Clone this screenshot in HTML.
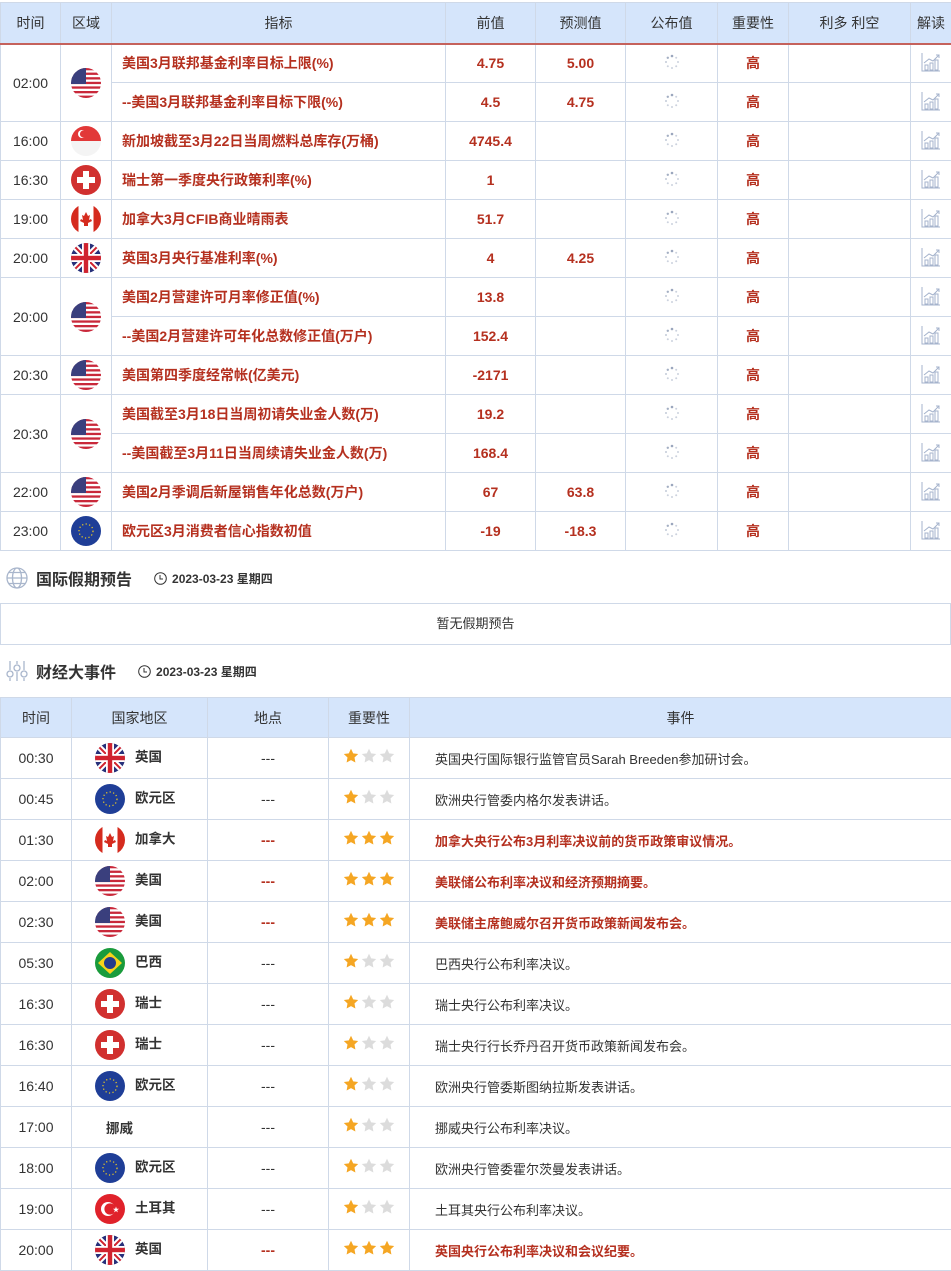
<!DOCTYPE html>
<html><head><meta charset="utf-8">
<style>
*{margin:0;padding:0;box-sizing:border-box}
body{width:951px;height:1270px;overflow:hidden;background:#fff;font-family:"Liberation Sans","Noto Sans CJK SC",sans-serif;font-size:14px;color:#333;position:relative}
table{border-collapse:collapse;table-layout:fixed;position:absolute;left:0;width:951px}
td,th{border:1px solid #cfd9e8;text-align:center;vertical-align:middle;padding:0;overflow:hidden;white-space:nowrap}
th{background:#d5e5fb;font-weight:normal;color:#333;font-size:14px}
#t1{top:2px}
#t1 th{height:41px;border-bottom:2px solid #c5625c}
#t1 td{height:39px}
.r{color:#b5301f;font-weight:bold}
.ind{text-align:left;padding-left:10px;color:#b5301f;font-weight:bold}
.flag{width:30px;height:30px;display:inline-block;vertical-align:middle}
.sec{position:absolute;left:6px;font-size:16px;font-weight:bold;color:#333;display:flex;align-items:center}
.sec .d{font-size:12px;margin-left:22px;font-weight:bold;display:flex;align-items:center}
.box{position:absolute;left:0;top:603px;width:951px;height:42px;border:1px solid #cfd9e8;text-align:center;line-height:40px;font-size:13px}
#t2{top:697px}
#t2 th{height:40px}
#t2 td{height:41px}
.cn{text-align:left;padding-left:23px;font-weight:bold;font-size:13.5px}
.cn svg{margin-right:10px}
.ev{text-align:left;padding-left:25px;font-size:13px}
.evr{color:#b5301f;font-weight:bold}
.st{text-align:left;padding-left:14px}
.st svg{width:16px;height:16px;margin-right:2px;vertical-align:middle;position:relative;top:-3px}
.dash{color:#333}
.dashr{color:#b5301f;font-weight:bold}
</style></head><body>
<svg width="0" height="0" style="position:absolute">
<defs>
<clipPath id="c"><circle cx="15" cy="15" r="15"/></clipPath>
<symbol id="sy" viewBox="0 0 16 16"><path d="M8 .8l2.2 4.6 5 .6-3.7 3.5.9 5L8 12.1 3.6 14.5l.9-5L.8 6l5-.6z" fill="#f5a623"/></symbol>
<symbol id="sg2" viewBox="0 0 16 16"><path d="M8 .8l2.2 4.6 5 .6-3.7 3.5.9 5L8 12.1 3.6 14.5l.9-5L.8 6l5-.6z" fill="#dcdcdc"/></symbol>
<symbol id="us" viewBox="0 0 30 30"><g clip-path="url(#c)"><rect width="30" height="30" fill="#fff"/><g fill="#c9283a"><rect y="0" width="30" height="2.3"/><rect y="4.6" width="30" height="2.3"/><rect y="9.2" width="30" height="2.3"/><rect y="13.8" width="30" height="2.3"/><rect y="18.4" width="30" height="2.3"/><rect y="23" width="30" height="2.3"/><rect y="27.6" width="30" height="2.4"/></g><rect width="15" height="16" fill="#3a3f7d"/></g></symbol>
<symbol id="sg" viewBox="0 0 30 30"><g clip-path="url(#c)"><rect width="30" height="30" fill="#f4f4f4"/><rect width="30" height="15" fill="#e23838"/><circle cx="11" cy="8" r="4" fill="#fff"/><circle cx="12.5" cy="8" r="3.6" fill="#e23838"/></g></symbol>
<symbol id="ch" viewBox="0 0 30 30"><circle cx="15" cy="15" r="15" fill="#d1302f"/><rect x="12" y="6" width="6" height="18" fill="#fff"/><rect x="6" y="12" width="18" height="6" fill="#fff"/></symbol>
<symbol id="ca" viewBox="0 0 30 30"><g clip-path="url(#c)"><rect width="30" height="30" fill="#fff"/><rect width="7.5" height="30" fill="#d52b1e"/><rect x="22.5" width="7.5" height="30" fill="#d52b1e"/><path d="M15 8l2 4 2-1-1 5 2-1 1 2-4 2v3h-4v-3l-4-2 1-2 2 1-1-5 2 1z" fill="#d52b1e"/></g></symbol>
<symbol id="gb" viewBox="0 0 30 30"><g clip-path="url(#c)"><rect width="30" height="30" fill="#27307a"/><path d="M0 0L30 30M30 0L0 30" stroke="#fff" stroke-width="6"/><path d="M0 0L30 30M30 0L0 30" stroke="#d0232f" stroke-width="2"/><rect x="11" width="8" height="30" fill="#fff"/><rect y="11" width="30" height="8" fill="#fff"/><rect x="12.8" width="4.4" height="30" fill="#d0232f"/><rect y="12.8" width="30" height="4.4" fill="#d0232f"/></g></symbol>
<symbol id="eu" viewBox="0 0 30 30"><circle cx="15" cy="15" r="15" fill="#1f3e97"/><circle cx="15" cy="15" r="7" fill="none" stroke="#f5d020" stroke-width="1.2" stroke-dasharray="1.2 2.4"/></symbol>
<symbol id="br" viewBox="0 0 30 30"><circle cx="15" cy="15" r="15" fill="#1a9b3c"/><path d="M15 4L27 15 15 26 3 15z" fill="#f8d21a"/><circle cx="15" cy="15" r="6" fill="#243b8c"/></symbol>
<symbol id="tr" viewBox="0 0 30 30"><circle cx="15" cy="15" r="15" fill="#e0222b"/><circle cx="13" cy="15" r="7" fill="#fff"/><circle cx="15" cy="15" r="5.6" fill="#e0222b"/><path d="M21 12.5l.8 2.2h2.3l-1.9 1.4.7 2.3-1.9-1.4-1.9 1.4.7-2.3-1.9-1.4h2.3z" fill="#fff"/></symbol>
<symbol id="ld" viewBox="0 0 16 16"><g fill="#9aa6bd"><circle cx="8" cy="2" r="1.3"/><circle cx="12.2" cy="3.8" r="1" opacity=".5"/><circle cx="14" cy="8" r="1" opacity=".5"/><circle cx="12.2" cy="12.2" r="1" opacity=".5"/><circle cx="8" cy="14" r="1" opacity=".5"/><circle cx="3.8" cy="12.2" r="1" opacity=".5"/><circle cx="2" cy="8" r="1" opacity=".6"/><circle cx="3.8" cy="3.8" r="1.2" opacity=".9"/></g></symbol>
<symbol id="ch2" viewBox="0 0 22 22"><g fill="none" stroke="#a5b3cc" stroke-width="1"><path d="M2 2v18h18"/><rect x="5" y="14" width="3" height="5"/><rect x="10" y="12" width="3" height="7"/><rect x="15" y="9" width="3" height="10"/><path d="M4 12l5-4 4 2 6-6M16 4h3v3"/></g></symbol>
</defs></svg>

<table id="t1">
<colgroup><col style="width:60px"><col style="width:51px"><col style="width:334px"><col style="width:90px"><col style="width:90px"><col style="width:92px"><col style="width:71px"><col style="width:122px"><col style="width:41px"></colgroup>
<tr><th>时间</th><th>区域</th><th>指标</th><th>前值</th><th>预测值</th><th>公布值</th><th>重要性</th><th>利多 利空</th><th>解读</th></tr>
<tr><td rowspan="2">02:00</td><td rowspan="2"><svg class="flag"><use href="#us"/></svg></td><td class="ind">美国3月联邦基金利率目标上限(%)</td><td class="r">4.75</td><td class="r">5.00</td><td><svg width="16" height="16"><use href="#ld"/></svg></td><td class="r">高</td><td></td><td><svg width="22" height="22"><use href="#ch2"/></svg></td></tr>
<tr><td class="ind">--美国3月联邦基金利率目标下限(%)</td><td class="r">4.5</td><td class="r">4.75</td><td><svg width="16" height="16"><use href="#ld"/></svg></td><td class="r">高</td><td></td><td><svg width="22" height="22"><use href="#ch2"/></svg></td></tr>
<tr><td>16:00</td><td><svg class="flag"><use href="#sg"/></svg></td><td class="ind">新加坡截至3月22日当周燃料总库存(万桶)</td><td class="r">4745.4</td><td></td><td><svg width="16" height="16"><use href="#ld"/></svg></td><td class="r">高</td><td></td><td><svg width="22" height="22"><use href="#ch2"/></svg></td></tr>
<tr><td>16:30</td><td><svg class="flag"><use href="#ch"/></svg></td><td class="ind">瑞士第一季度央行政策利率(%)</td><td class="r">1</td><td></td><td><svg width="16" height="16"><use href="#ld"/></svg></td><td class="r">高</td><td></td><td><svg width="22" height="22"><use href="#ch2"/></svg></td></tr>
<tr><td>19:00</td><td><svg class="flag"><use href="#ca"/></svg></td><td class="ind">加拿大3月CFIB商业晴雨表</td><td class="r">51.7</td><td></td><td><svg width="16" height="16"><use href="#ld"/></svg></td><td class="r">高</td><td></td><td><svg width="22" height="22"><use href="#ch2"/></svg></td></tr>
<tr><td>20:00</td><td><svg class="flag"><use href="#gb"/></svg></td><td class="ind">英国3月央行基准利率(%)</td><td class="r">4</td><td class="r">4.25</td><td><svg width="16" height="16"><use href="#ld"/></svg></td><td class="r">高</td><td></td><td><svg width="22" height="22"><use href="#ch2"/></svg></td></tr>
<tr><td rowspan="2">20:00</td><td rowspan="2"><svg class="flag"><use href="#us"/></svg></td><td class="ind">美国2月营建许可月率修正值(%)</td><td class="r">13.8</td><td></td><td><svg width="16" height="16"><use href="#ld"/></svg></td><td class="r">高</td><td></td><td><svg width="22" height="22"><use href="#ch2"/></svg></td></tr>
<tr><td class="ind">--美国2月营建许可年化总数修正值(万户)</td><td class="r">152.4</td><td></td><td><svg width="16" height="16"><use href="#ld"/></svg></td><td class="r">高</td><td></td><td><svg width="22" height="22"><use href="#ch2"/></svg></td></tr>
<tr><td>20:30</td><td><svg class="flag"><use href="#us"/></svg></td><td class="ind">美国第四季度经常帐(亿美元)</td><td class="r">-2171</td><td></td><td><svg width="16" height="16"><use href="#ld"/></svg></td><td class="r">高</td><td></td><td><svg width="22" height="22"><use href="#ch2"/></svg></td></tr>
<tr><td rowspan="2">20:30</td><td rowspan="2"><svg class="flag"><use href="#us"/></svg></td><td class="ind">美国截至3月18日当周初请失业金人数(万)</td><td class="r">19.2</td><td></td><td><svg width="16" height="16"><use href="#ld"/></svg></td><td class="r">高</td><td></td><td><svg width="22" height="22"><use href="#ch2"/></svg></td></tr>
<tr><td class="ind">--美国截至3月11日当周续请失业金人数(万)</td><td class="r">168.4</td><td></td><td><svg width="16" height="16"><use href="#ld"/></svg></td><td class="r">高</td><td></td><td><svg width="22" height="22"><use href="#ch2"/></svg></td></tr>
<tr><td>22:00</td><td><svg class="flag"><use href="#us"/></svg></td><td class="ind">美国2月季调后新屋销售年化总数(万户)</td><td class="r">67</td><td class="r">63.8</td><td><svg width="16" height="16"><use href="#ld"/></svg></td><td class="r">高</td><td></td><td><svg width="22" height="22"><use href="#ch2"/></svg></td></tr>
<tr><td>23:00</td><td><svg class="flag"><use href="#eu"/></svg></td><td class="ind">欧元区3月消费者信心指数初值</td><td class="r">-19</td><td class="r">-18.3</td><td><svg width="16" height="16"><use href="#ld"/></svg></td><td class="r">高</td><td></td><td><svg width="22" height="22"><use href="#ch2"/></svg></td></tr>
</table>

<div class="sec" style="top:566px"><svg width="22" height="22" viewBox="0 0 22 22" style="margin-right:8px"><g fill="none" stroke="#a9b6cc" stroke-width="1.3"><circle cx="11" cy="11" r="10"/><ellipse cx="11" cy="11" rx="4.5" ry="10"/><path d="M1 11h20M3 5.5h16M3 16.5h16"/></g></svg>国际假期预告<span class="d"><svg width="13" height="13" viewBox="0 0 13 13" style="margin-right:5px"><circle cx="6.5" cy="6.5" r="5.8" fill="none" stroke="#333" stroke-width="1"/><path d="M6 3v4h3" fill="none" stroke="#333"/></svg>2023-03-23 星期四</span></div>
<div class="box">暂无假期预告</div>
<div class="sec" style="top:659px"><svg width="22" height="22" viewBox="0 0 22 22" style="margin-right:8px"><g fill="none" stroke="#a9b6cc" stroke-width="1.3"><path d="M4 1v9M4 18v3M11 1v3M11 12v9M18 1v9M18 18v3"/><circle cx="4" cy="14" r="3"/><circle cx="11" cy="8" r="3"/><circle cx="18" cy="14" r="3"/></g></svg>财经大事件<span class="d"><svg width="13" height="13" viewBox="0 0 13 13" style="margin-right:5px"><circle cx="6.5" cy="6.5" r="5.8" fill="none" stroke="#333" stroke-width="1"/><path d="M6 3v4h3" fill="none" stroke="#333"/></svg>2023-03-23 星期四</span></div>

<table id="t2">
<colgroup><col style="width:71px"><col style="width:136px"><col style="width:121px"><col style="width:81px"><col style="width:542px"></colgroup>
<tr><th>时间</th><th>国家地区</th><th>地点</th><th>重要性</th><th>事件</th></tr>
<tr><td>00:30</td><td class="cn"><svg class="flag"><use href="#gb"/></svg>英国</td><td class="dash">---</td><td class="st"><svg><use href="#sy"/></svg><svg><use href="#sg2"/></svg><svg><use href="#sg2"/></svg></td><td class="ev">英国央行国际银行监管官员Sarah Breeden参加研讨会。</td></tr>
<tr><td>00:45</td><td class="cn"><svg class="flag"><use href="#eu"/></svg>欧元区</td><td class="dash">---</td><td class="st"><svg><use href="#sy"/></svg><svg><use href="#sg2"/></svg><svg><use href="#sg2"/></svg></td><td class="ev">欧洲央行管委内格尔发表讲话。</td></tr>
<tr><td>01:30</td><td class="cn"><svg class="flag"><use href="#ca"/></svg>加拿大</td><td class="dashr">---</td><td class="st"><svg><use href="#sy"/></svg><svg><use href="#sy"/></svg><svg><use href="#sy"/></svg></td><td class="ev evr">加拿大央行公布3月利率决议前的货币政策审议情况。</td></tr>
<tr><td>02:00</td><td class="cn"><svg class="flag"><use href="#us"/></svg>美国</td><td class="dashr">---</td><td class="st"><svg><use href="#sy"/></svg><svg><use href="#sy"/></svg><svg><use href="#sy"/></svg></td><td class="ev evr">美联储公布利率决议和经济预期摘要。</td></tr>
<tr><td>02:30</td><td class="cn"><svg class="flag"><use href="#us"/></svg>美国</td><td class="dashr">---</td><td class="st"><svg><use href="#sy"/></svg><svg><use href="#sy"/></svg><svg><use href="#sy"/></svg></td><td class="ev evr">美联储主席鲍威尔召开货币政策新闻发布会。</td></tr>
<tr><td>05:30</td><td class="cn"><svg class="flag"><use href="#br"/></svg>巴西</td><td class="dash">---</td><td class="st"><svg><use href="#sy"/></svg><svg><use href="#sg2"/></svg><svg><use href="#sg2"/></svg></td><td class="ev">巴西央行公布利率决议。</td></tr>
<tr><td>16:30</td><td class="cn"><svg class="flag"><use href="#ch"/></svg>瑞士</td><td class="dash">---</td><td class="st"><svg><use href="#sy"/></svg><svg><use href="#sg2"/></svg><svg><use href="#sg2"/></svg></td><td class="ev">瑞士央行公布利率决议。</td></tr>
<tr><td>16:30</td><td class="cn"><svg class="flag"><use href="#ch"/></svg>瑞士</td><td class="dash">---</td><td class="st"><svg><use href="#sy"/></svg><svg><use href="#sg2"/></svg><svg><use href="#sg2"/></svg></td><td class="ev">瑞士央行行长乔丹召开货币政策新闻发布会。</td></tr>
<tr><td>16:40</td><td class="cn"><svg class="flag"><use href="#eu"/></svg>欧元区</td><td class="dash">---</td><td class="st"><svg><use href="#sy"/></svg><svg><use href="#sg2"/></svg><svg><use href="#sg2"/></svg></td><td class="ev">欧洲央行管委斯图纳拉斯发表讲话。</td></tr>
<tr><td>17:00</td><td class="cn" style="padding-left:34px">挪威</td><td class="dash">---</td><td class="st"><svg><use href="#sy"/></svg><svg><use href="#sg2"/></svg><svg><use href="#sg2"/></svg></td><td class="ev">挪威央行公布利率决议。</td></tr>
<tr><td>18:00</td><td class="cn"><svg class="flag"><use href="#eu"/></svg>欧元区</td><td class="dash">---</td><td class="st"><svg><use href="#sy"/></svg><svg><use href="#sg2"/></svg><svg><use href="#sg2"/></svg></td><td class="ev">欧洲央行管委霍尔茨曼发表讲话。</td></tr>
<tr><td>19:00</td><td class="cn"><svg class="flag"><use href="#tr"/></svg>土耳其</td><td class="dash">---</td><td class="st"><svg><use href="#sy"/></svg><svg><use href="#sg2"/></svg><svg><use href="#sg2"/></svg></td><td class="ev">土耳其央行公布利率决议。</td></tr>
<tr><td>20:00</td><td class="cn"><svg class="flag"><use href="#gb"/></svg>英国</td><td class="dashr">---</td><td class="st"><svg><use href="#sy"/></svg><svg><use href="#sy"/></svg><svg><use href="#sy"/></svg></td><td class="ev evr">英国央行公布利率决议和会议纪要。</td></tr>
</table>
</body></html>
